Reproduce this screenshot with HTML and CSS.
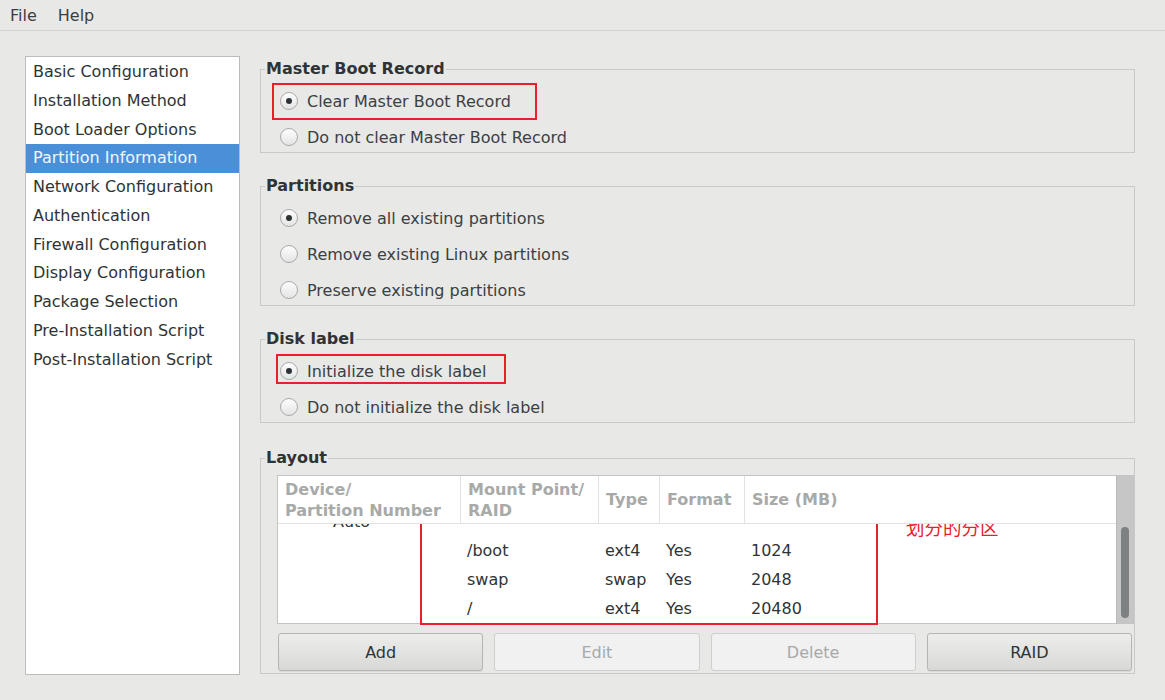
FILE: index.html
```html
<!DOCTYPE html>
<html>
<head>
<meta charset="utf-8">
<link rel="stylesheet" href="styles.css">
</head>
<body>
<div class="menubar">
  <span class="menu-item">File</span>
  <span class="menu-item">Help</span>
</div>
<div class="main">
  <ul class="sidebar">
    <li>Basic Configuration</li>
    <li>Installation Method</li>
    <li>Boot Loader Options</li>
    <li class="active">Partition Information</li>
    <li>Network Configuration</li>
    <li>Authentication</li>
    <li>Firewall Configuration</li>
    <li>Display Configuration</li>
    <li>Package Selection</li>
    <li>Pre-Installation Script</li>
    <li>Post-Installation Script</li>
  </ul>
  <div class="content">
    <fieldset class="frame">
      <legend>Master Boot Record</legend>
      <div class="options">
        <div class="option"><span class="radio checked"></span>Clear Master Boot Record</div>
        <div class="option"><span class="radio"></span>Do not clear Master Boot Record</div>
      </div>
    </fieldset>
    <fieldset class="frame">
      <legend>Partitions</legend>
      <div class="options">
        <div class="option"><span class="radio checked"></span>Remove all existing partitions</div>
        <div class="option"><span class="radio"></span>Remove existing Linux partitions</div>
        <div class="option"><span class="radio"></span>Preserve existing partitions</div>
      </div>
    </fieldset>
    <fieldset class="frame">
      <legend>Disk label</legend>
      <div class="options">
        <div class="option"><span class="radio checked"></span>Initialize the disk label</div>
        <div class="option"><span class="radio"></span>Do not initialize the disk label</div>
      </div>
    </fieldset>
    <fieldset class="frame frame-layout">
      <legend>Layout</legend>
      <div class="layout">
        <div class="table">
          <div class="grid-area">
            <div class="thead">
              <div class="th">Device/<br>Partition Number</div>
              <div class="th">Mount Point/<br>RAID</div>
              <div class="th">Type</div>
              <div class="th">Format</div>
              <div class="th last">Size (MB)</div>
            </div>
            <div class="tbody">
              <div class="rows">
                <div class="row"><div class="td auto">Auto</div><div class="td"></div><div class="td"></div><div class="td"></div><div class="td"></div></div>
                <div class="row"><div class="td"></div><div class="td">/boot</div><div class="td">ext4</div><div class="td">Yes</div><div class="td">1024</div></div>
                <div class="row"><div class="td"></div><div class="td">swap</div><div class="td">swap</div><div class="td">Yes</div><div class="td">2048</div></div>
                <div class="row"><div class="td"></div><div class="td">/</div><div class="td">ext4</div><div class="td">Yes</div><div class="td">20480</div></div>
              </div>
            </div>
          </div>
          <div class="scrollbar"><div class="thumb"></div></div>
        </div>
        <div class="buttons">
          <button class="btn">Add</button>
          <button class="btn" disabled>Edit</button>
          <button class="btn" disabled>Delete</button>
          <button class="btn">RAID</button>
        </div>
      </div>
    </fieldset>
  </div>
</div>
<div class="note note-1"></div>
<div class="note note-2"></div>
<div class="note note-3"></div>
<div class="note-text">划分的分区</div>
</body>
</html>
```
FILE: styles.css
```css
html, body {
  margin: 0;
  padding: 0;
}
body {
  width: 1165px;
  height: 700px;
  overflow: hidden;
  position: relative;
  background: #e8e8e7;
  font-family: "DejaVu Sans", "Noto Sans CJK SC", sans-serif;
  font-size: 16px;
  color: #2e3436;
}
.menubar {
  height: 30px;
  border-bottom: 1px solid #d2d2d1;
  display: flex;
  align-items: center;
  padding-left: 10px;
  gap: 21px;
  color: #3a3f40;
}
.main {
  display: flex;
  padding: 25px 0 0 25px;
  gap: 20px;
}
.sidebar {
  list-style: none;
  margin: 0;
  padding: 0;
  width: 213px;
  height: 617px;
  border: 1px solid #bcbcbc;
  background: #fff;
}
.sidebar li {
  height: 28.75px;
  line-height: 28.75px;
  padding-left: 7px;
  white-space: nowrap;
}
.sidebar li:first-child {
  margin-top: 1px;
}
.sidebar li.active {
  background: #4a90d9;
  color: #f2f6fb;
}
.content {
  width: 875px;
  margin-top: 4px;
  display: flex;
  flex-direction: column;
  gap: 24px;
}
.frame {
  margin: 0;
  padding: 0;
  border: 1px solid #c9c9c8;
  min-width: 0;
}
.frame-layout {
  margin-top: 2px;
}
.frame legend {
  margin-left: 4px;
  padding: 0 1px;
  font-weight: bold;
  line-height: 18px;
  color: #2e3436;
}
.options {
  display: flex;
  flex-direction: column;
  gap: 6px;
  padding: 8px 0 0 19px;
}
.option {
  display: flex;
  align-items: center;
  height: 30px;
  gap: 9px;
  color: #3b4042;
}
.radio {
  width: 18px;
  height: 18px;
  box-sizing: border-box;
  border: 1px solid #a9a9a9;
  border-radius: 50%;
  background: linear-gradient(#fdfdfd, #e4e4e4);
  display: flex;
  align-items: center;
  justify-content: center;
  flex: none;
}
.radio.checked::after {
  content: "";
  width: 6px;
  height: 6px;
  border-radius: 50%;
  background: #2e3436;
}
.layout {
  padding: 8px 0 2px 16px;
}
.table {
  height: 149px;
  box-sizing: border-box;
  border: 1px solid #c4c4c4;
  background: #fff;
  display: flex;
}
.grid-area {
  flex: 1;
  display: flex;
  flex-direction: column;
  overflow: hidden;
  min-width: 0;
}
.thead, .row {
  display: grid;
  grid-template-columns: 183px 138px 61px 85px 1fr;
}
.thead {
  height: 48px;
  box-sizing: border-box;
  border-bottom: 1px solid #e2e2e2;
  position: relative;
  z-index: 1;
  background: #fff;
}
.th {
  border-right: 1px solid #e2e2e2;
  padding-left: 7px;
  display: flex;
  align-items: center;
  font-weight: bold;
  color: #a8aaa8;
  line-height: 21px;
  white-space: nowrap;
}
.th.last {
  border-right: none;
}
.tbody {
  flex: 1;
  overflow: hidden;
}
.rows {
  margin-top: -17px;
}
.row {
  height: 29px;
  align-items: center;
}
.td {
  padding-left: 6px;
  white-space: nowrap;
  color: #2e3436;
}
.td.auto {
  padding-left: 55px;
}
.scrollbar {
  width: 16px;
  background: #c5c6c5;
  border-left: 1px solid #b8b8b8;
  display: flex;
  justify-content: center;
  padding-top: 51px;
}
.thumb {
  width: 8px;
  height: 91px;
  border-radius: 4px;
  background: #7e8182;
}
.buttons {
  display: flex;
  gap: 11px;
  margin-top: 9px;
  padding: 0 2px 0 1px;
}
.btn {
  flex: 1;
  height: 38px;
  box-sizing: border-box;
  border: 1px solid #b4b4b4;
  border-radius: 3px;
  background: linear-gradient(#ededec, #d8d8d7);
  box-shadow: 0 1px 0 rgba(0,0,0,0.06);
  font-family: "DejaVu Sans", sans-serif;
  font-size: 16px;
  color: #2e3436;
  padding: 0;
}
.btn:disabled {
  background: #f1f1f1;
  border-color: #cfcfcf;
  color: #a7a9a9;
  box-shadow: none;
}
.note {
  position: absolute;
  box-sizing: border-box;
  border: 2px solid #e8202a;
}
.note-1 {
  left: 272px;
  top: 83px;
  width: 265px;
  height: 37px;
}
.note-2 {
  left: 276px;
  top: 354px;
  width: 230px;
  height: 30px;
}
.note-3 {
  left: 420px;
  top: 507px;
  width: 458px;
  height: 118px;
}
.note-text {
  position: absolute;
  left: 906px;
  top: 515px;
  font-family: "Noto Sans CJK SC", sans-serif;
  font-size: 18.5px;
  line-height: 24px;
  color: #e8202a;
}
```
